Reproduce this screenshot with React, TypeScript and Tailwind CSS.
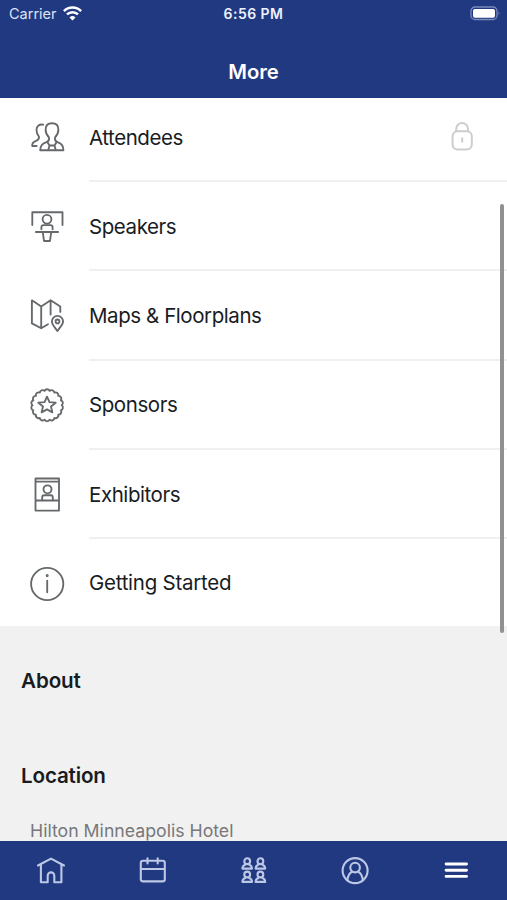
import type { ReactNode } from "react";

const star = "M20 11.6 L22.5 17.2 L28.7 17.7 L24 21.5 L25.4 27.4 L20 24.4 L14.6 27.4 L16 21.5 L11.3 17.7 L17.5 17.2 Z";

function scallops() {
  const n = 18;
  const r = 14.6;
  const pts = Array.from({ length: n + 1 }, (_, i) => {
    const a = (i / n) * Math.PI * 2;
    return [20.1 + r * Math.cos(a), 20.3 + r * Math.sin(a)];
  });
  return pts
    .map(([x, y], i) => (i ? `A2.8 2.8 0 0 1 ${x.toFixed(2)} ${y.toFixed(2)}` : `M${x} ${y}`))
    .join(" ");
}

function RowIcon({ children }: { children: ReactNode }) {
  return (
    <svg className="size-10 shrink-0" viewBox="0 0 40 40" fill="none" stroke="#66696b" strokeWidth="1.85" strokeLinecap="round" strokeLinejoin="round">
      {children}
    </svg>
  );
}

const rows: { label: string; locked?: boolean; icon: ReactNode }[] = [
  {
    label: "Attendees",
    locked: true,
    icon: (
      <>
        <path d="M22 20.5 C20 18.5 18.6 15.5 18.6 12.5 C18.6 8.5 21 6.2 25 6.2 C29 6.2 31.4 8.5 31.4 12.5 C31.4 15.5 30 18.5 28 20.5 C27.6 23.5 28.5 24.5 31 25.3 C35 26.5 36.4 28.5 36.4 33.2 H13.2 C13.2 28.5 15 26.5 19 25.3 C21.5 24.5 22.4 23.5 22 20.5" />
        <path d="M20.5 25.2 L22.5 28.5 H27.5 L29.5 25.2 M22.5 28.5 L21.3 33 M27.5 28.5 L28.7 33" />
        <path d="M16.3 7.6 C12.5 6.9 9.5 9 9.5 13 C9.5 15.8 10.6 18 12 19.8 C12.2 22 11.4 23 9 23.8 C6 24.8 5 26 5.2 29 H9.6" />
      </>
    ),
  },
  {
    label: "Speakers",
    icon: (
      <>
        <path d="M5.3 18 V5.2 H35.5 V18" />
        <circle cx="20" cy="12.2" r="4.4" />
        <path d="M14.4 22.2 V20.3 Q14.4 18.1 16.6 18.1 H23.4 Q25.6 18.1 25.6 20.3 V22.2 M8.9 25 H31.1 M15.8 25.2 L17 34 H23 L24.2 25.2" />
      </>
    ),
  },
  {
    label: "Maps & Floorplans",
    icon: (
      <>
        <path d="M21 28.2 L14.2 32.3 L4.9 27.4 V4.3 L14.2 10.5 L23.6 4.3 L33.3 10.5 V15.9 M14.2 10.5 V32.3 M23.6 4.3 V18.5" />
        <path d="M30.4 35.1 C28 31.3 24.9 28.7 24.9 25.5 A5.6 5.6 0 0 1 36.1 25.5 C36.1 28.7 32.8 31.3 30.4 35.1 Z" />
        <circle cx="30.5" cy="25.4" r="1.9" />
      </>
    ),
  },
  { label: "Sponsors", icon: <><path d={scallops()} /><path d={star} /></> },
  {
    label: "Exhibitors",
    icon: (
      <>
        <path d="M8.5 4.5 H32 V36.6 H8.5 Z M8.5 7.6 H32 M8.5 26.5 H32" />
        <circle cx="20.5" cy="15.3" r="4" />
        <path d="M15.2 26.2 V23.2 Q15.2 21.2 17.2 21.2 H23.8 Q25.8 21.2 25.8 23.2 V26.2" />
      </>
    ),
  },
  {
    label: "Getting Started",
    icon: (
      <>
        <circle cx="20.2" cy="20" r="16.1" />
        <path d="M20.2 16.7 V28.3" />
        <circle cx="20.2" cy="11.6" r="0.6" fill="#66696b" />
      </>
    ),
  },
];

function Lock() {
  return (
    <svg className="mt-[2px] mr-[33px] h-8 w-6" viewBox="0 0 24 32" fill="none" stroke="#cdcdcd" strokeWidth="2" strokeLinecap="round">
      <rect x="2.6" y="10.3" width="19.2" height="18.2" rx="5" />
      <path d="M6.2 10 V8 A5.9 5.9 0 0 1 18 8 V10 M12.2 17.3 V20.8" />
    </svg>
  );
}

function TabIcon({ children, active }: { children: ReactNode; active?: boolean }) {
  return (
    <svg className={active ? "h-8 w-8 text-white" : "h-8 w-8 text-[#bdc8e6]"} viewBox="0 0 32 32" fill="none" stroke="currentColor" strokeWidth="2.1" strokeLinecap="round" strokeLinejoin="round">
      {children}
    </svg>
  );
}

const people = [[10.2, 3.4], [23.4, 3.4], [10.2, 16.7], [23.4, 16.7]];

export default function App() {
  return (
    <div className="flex h-[900px] w-[507px] flex-col overflow-hidden bg-[#f1f1f2] font-['Inter','Liberation_Sans',sans-serif] text-[#191c1f]">
      <header className="h-[98.4px] shrink-0 bg-[#213981] text-white">
        <div className="grid h-[27px] grid-cols-3 items-center px-[7px] text-[14px]">
          <div className="flex items-center gap-[6px] pl-[2px] text-[#dce3f5]">
            <span className="text-[14.5px]">Carrier</span>
            <svg className="h-[15px] w-[19px]" viewBox="0 0 19 15" fill="none" stroke="white" strokeWidth="2.5">
              <path d="M0.9 5.1 A12.2 12.2 0 0 1 18.1 5.1 M4 8.4 A7.8 7.8 0 0 1 15 8.4" />
              <path d="M9.5 14.5 L6.5 11.4 A4.3 4.3 0 0 1 12.5 11.4 Z" fill="white" stroke="none" />
            </svg>
          </div>
          <span className="text-center text-[14px] font-semibold tracking-[0.45px] text-[#eef2fc]">6:56 PM</span>
          <svg className="h-[15px] w-[31px] justify-self-end" viewBox="0 0 31 15" fill="none">
            <rect x="2" y="1" width="26" height="12.5" rx="4" stroke="#7a8abb" strokeWidth="1.3" />
            <rect x="4" y="3" width="22" height="8.8" rx="1.8" fill="white" />
            <path d="M29.6 5.2 Q31.3 7.2 29.6 9.2 Z" fill="#7a8abb" />
          </svg>
        </div>
        <h1 className="mt-[31px] text-center text-[20.3px] leading-7 font-semibold tracking-[-0.1px]">More</h1>
      </header>
      <main className="relative min-h-0 flex-1 overflow-hidden">
        <ul className="-mt-[5.6px] bg-white">
          {rows.map((row, i) => (
            <li key={row.label} className={i === rows.length - 1 ? "flex h-[87.4px] pl-[27px]" : "flex h-[89.25px] pl-[27px]"}>
              <div className="flex h-[89px] items-center">
                <RowIcon>{row.icon}</RowIcon>
              </div>
              <div className={i === rows.length - 1 ? "ml-[22px] flex flex-1 items-center" : "ml-[22px] flex flex-1 items-center justify-between border-b-2 border-[#f0f0f0]"}>
                <span className={i === rows.length - 1 ? "pt-px text-[20.5px] tracking-[-0.26px]" : "pt-[3px] text-[20.5px] tracking-[-0.43px]"}>{row.label}</span>
                {row.locked && <Lock />}
              </div>
            </li>
          ))}
        </ul>
        <section className="px-[21px] pt-[41px]">
          <h2 className="text-[20.6px] leading-7 font-semibold tracking-[-0.1px]">About</h2>
          <h2 className="mt-[67px] text-[20.6px] leading-7 font-semibold tracking-[-0.15px]">Location</h2>
          <p className="mt-[29px] pl-[9px] text-[17.7px] leading-6 whitespace-nowrap text-[#77787a]">Hilton Minneapolis Hotel</p>
        </section>
        <div className="absolute top-[106px] right-[3px] h-[429px] w-[4px] rounded-full bg-[#919191]" />
      </main>
      <nav className="grid h-[59.4px] shrink-0 grid-cols-5 items-center justify-items-center bg-[#213981] pt-px">
        <TabIcon>
          <path d="M3 10.5 L16 3.6 L29 10.5 M5.9 9.5 V27.2 H12.7 V20.7 A3.3 3.3 0 0 1 19.3 20.7 V27.2 H26.4 V9.5" />
        </TabIcon>
        <TabIcon>
          <path d="M7 5.8 H26.6 Q28.8 5.8 28.8 8 V24.2 Q28.8 26.4 26.6 26.4 H7 Q4.8 26.4 4.8 24.2 V8 Q4.8 5.8 7 5.8 Z M5 14 H28.6 M11.5 3.4 V8.4 M21.7 3.4 V8.4" />
        </TabIcon>
        <TabIcon>
          {people.map(([x, y]) => (
            <g key={`${x}-${y}`}>
              <circle cx={x} cy={y + 2.8} r="2.9" />
              <path d={`M${x - 2} ${y + 6.3} Q${x - 4.7} ${y + 7.2} ${x - 4.8} ${y + 10.2} H${x + 4.8} Q${x + 4.7} ${y + 7.2} ${x + 2} ${y + 6.3}`} />
            </g>
          ))}
        </TabIcon>
        <TabIcon>
          <circle cx="16.1" cy="15.6" r="12.5" />
          <circle cx="16.1" cy="12.6" r="4.8" />
          <path d="M13.1 16.8 Q9.3 18.3 8.4 25.3 M19.1 16.8 Q22.9 18.3 23.8 25.3" />
        </TabIcon>
        <TabIcon active>
          <path d="M6.1 9 H26.5 M6.1 15.2 H26.5 M6.1 21.4 H26.5" strokeWidth="2.9" />
        </TabIcon>
      </nav>
    </div>
  );
}
